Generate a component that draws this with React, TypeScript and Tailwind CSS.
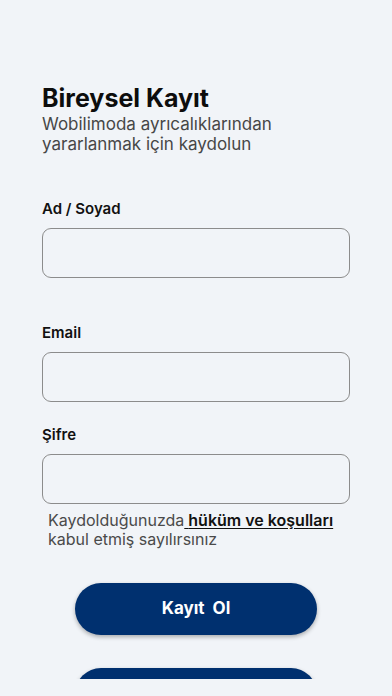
import React from "react";

function Field({ label, type = "text", className = "" }: { label: string; type?: string; className?: string }) {
  return (
    <div className={className}>
      <label className="block text-[15px] leading-5 font-semibold text-[#111]">{label}</label>
      <input
        type={type}
        className="mt-[9px] block h-[50px] w-full rounded-[9px] border border-[#8c8c8c] bg-transparent px-3 text-[16px] outline-none"
      />
    </div>
  );
}

export default function App() {
  return (
    <div className="h-[696px] w-full bg-[#f1f4f8] font-['Inter',sans-serif]">
      <div className="h-[679px] overflow-hidden px-[42px] pt-[84px]">
        <h1 className="text-[25px] leading-7 font-bold text-[#0d0d0d]">Bireysel Kayıt</h1>
        <p className="mt-[2px] text-[17px] leading-5 text-[#474747]">
          Wobilimoda ayrıcalıklarından
          <br />
          yararlanmak için kaydolun
        </p>

        <Field label="Ad / Soyad" className="mt-[45px]" />
        <Field label="Email" className="mt-[45px]" />
        <Field label="Şifre" type="password" className="mt-[23px]" />

        <p className="mt-[7px] pl-[6px] text-[16px] leading-[19px] text-[#4a4a4a]">
          Kaydolduğunuzda
          <a href="#" className="font-semibold text-[#111] underline underline-offset-2">
            {" "}hüküm ve koşulları
          </a>
          <br />
          kabul etmiş sayılırsınız
        </p>

        <div className="mt-[34px] flex flex-col items-center gap-[33px]">
          <button className="h-[52px] w-[242px] rounded-full bg-[#00306f] text-[17px] font-bold text-white shadow-[0_2px_4px_rgba(0,0,0,0.3)]">
            Kayıt&nbsp; Ol
          </button>
          <button
            aria-label="Giriş Yap"
            className="h-[52px] w-[242px] shrink-0 rounded-full bg-[#00306f] shadow-[0_2px_4px_rgba(0,0,0,0.3)]"
          />
        </div>
      </div>
    </div>
  );
}
